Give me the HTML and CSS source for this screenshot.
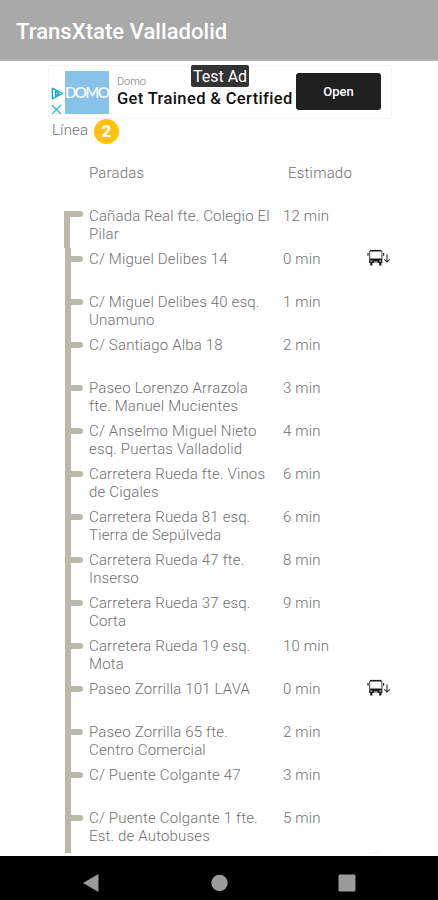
FILE: index.html
```
<!DOCTYPE html>
<html lang="es">
<head>
<meta charset="utf-8">
<title>TransXtate Valladolid</title>
<link rel="stylesheet" href="styles.css">
</head>
<body>
<svg width="0" height="0" class="defs">
  <symbol id="bus" viewBox="0 0 24 18">
    <path d="M3 1.7h11.6" stroke="#1a1a1a" stroke-width="1.6" fill="none"/>
    <path d="M2.7 2v7.5M14.9 2v7.5" stroke="#444" stroke-width="1"/>
    <path d="M1 4v2.8M16.6 4v2.8" stroke="#222" stroke-width="1.2"/>
    <path d="M2.2 9.6h13.2v4.4h-1v2.4h-2.2V14H5.4v2.4H3.2V14h-1z" fill="#1a1a1a"/>
    <path d="M3.1 12h2.3M12.2 12h2.3M6.8 13.2h4" stroke="#ddd" stroke-width="1.2"/>
    <path d="M20 5.2v7.5M17.3 10.4l2.7 2.5 2.9-2.5" stroke="#333" stroke-width="1.1" fill="none"/>
  </symbol>
</svg>
<header class="appbar">TransXtate Valladolid</header>
<main class="content">
  <section class="ad">
    <div class="adchoices">
      <svg width="13" height="13" viewBox="0 0 13 13"><path d="M1.3 1.2v10.6L11.5 6.5zM4.5 4.4v4.4l3.6-2.2z" fill="none" stroke="#16b0cb" stroke-width="1.4" stroke-linejoin="round"/></svg>
      <svg width="11" height="11" viewBox="0 0 11 11"><path d="M1 1l9 9M10 1L1 10" stroke="#38b7d2" stroke-width="1.4"/></svg>
    </div>
    <div class="logo">DOMO</div>
    <div class="adtext"><span class="brand">Domo</span><span class="slogan">Get Trained &amp; Certified</span></div>
    <div class="open">Open</div>
    <span class="testad">Test Ad</span>
  </section>
  <div class="line"><span>Línea</span><b class="badge">2</b></div>
  <div class="heads"><span>Paradas</span><span>Estimado</span></div>
  <div class="stops">
    <div class="row first"><i class="rail"></i><p>Cañada Real fte. Colegio El<br>Pilar</p><span>12 min</span></div>
    <div class="row"><i class="rail"></i><p>C/ Miguel Delibes 14</p><span>0 min</span><svg class="bus"><use href="#bus"/></svg></div>
    <div class="row"><i class="rail"></i><p>C/ Miguel Delibes 40 esq.<br>Unamuno</p><span>1 min</span></div>
    <div class="row"><i class="rail"></i><p>C/ Santiago Alba 18</p><span>2 min</span></div>
    <div class="row"><i class="rail"></i><p>Paseo Lorenzo Arrazola<br>fte. Manuel Mucientes</p><span>3 min</span></div>
    <div class="row"><i class="rail"></i><p>C/ Anselmo Miguel Nieto<br>esq. Puertas Valladolid</p><span>4 min</span></div>
    <div class="row"><i class="rail"></i><p>Carretera Rueda fte. Vinos<br>de Cigales</p><span>6 min</span></div>
    <div class="row"><i class="rail"></i><p>Carretera Rueda 81 esq.<br>Tierra de Sepúlveda</p><span>6 min</span></div>
    <div class="row"><i class="rail"></i><p>Carretera Rueda 47 fte.<br>Inserso</p><span>8 min</span></div>
    <div class="row"><i class="rail"></i><p>Carretera Rueda 37 esq.<br>Corta</p><span>9 min</span></div>
    <div class="row"><i class="rail"></i><p>Carretera Rueda 19 esq.<br>Mota</p><span>10 min</span></div>
    <div class="row"><i class="rail"></i><p>Paseo Zorrilla 101 LAVA</p><span>0 min</span><svg class="bus"><use href="#bus"/></svg></div>
    <div class="row"><i class="rail"></i><p>Paseo Zorrilla 65 fte.<br>Centro Comercial</p><span>2 min</span></div>
    <div class="row"><i class="rail"></i><p>C/ Puente Colgante 47</p><span>3 min</span></div>
    <div class="row last"><i class="rail"></i><p>C/ Puente Colgante 1 fte.<br>Est. de Autobuses</p><span>5 min</span><i class="peek"></i></div>
  </div>
</main>
<nav class="navbar">
  <svg viewBox="0 0 18 18"><path d="M16.5 0v18L1 9z"/></svg>
  <svg viewBox="0 0 18 18"><circle cx="9.5" cy="9" r="8.2"/></svg>
  <svg viewBox="0 0 18 18"><rect x="0.5" y="0.5" width="17" height="17" rx="1.5"/></svg>
</nav>
</body>
</html>
```

FILE: styles.css
```
* { box-sizing: border-box; }
body {
  margin: 0;
  width: 438px;
  height: 900px;
  overflow: hidden;
  display: flex;
  flex-direction: column;
  background: #fff;
  color: #707070;
  font: 300 15px/17.5px Roboto, sans-serif;
}
.defs { position: absolute; }
.appbar {
  height: 61px;
  flex: none;
  padding: 3px 0 0 16px;
  line-height: 57px;
  font-size: 22px;
  letter-spacing: .05px;
  font-weight: 500;
  color: #fff;
  background: #a9a9a9;
  border-bottom: 1px solid #b8b8b8;
}
.content { height: 795px; flex: none; overflow: hidden; }
.ad {
  position: relative;
  display: flex;
  width: 344px;
  height: 54px;
  margin: 4px 0 0 48px;
  border: 1px solid #f3f3f3;
  border-radius: 3px;
}
.adchoices {
  width: 16px;
  padding: 21px 0 0 2px;
  display: flex;
  flex-direction: column;
  gap: 4px;
}
.adchoices svg { flex: none; }
.logo {
  width: 44px;
  height: 43px;
  margin-top: 5px;
  background: #87c2e8;
  color: #fff;
  font: 500 15px/42px Lato, sans-serif;
  letter-spacing: -1.6px;
  white-space: nowrap;
}
.adtext { display: flex; flex-direction: column; width: 178px; padding: 7px 0 0 8px; white-space: nowrap; }
.brand { font-size: 11px; line-height: 17px; letter-spacing: -.1px; color: #777; }
.slogan { font-size: 16.5px; line-height: 17px; font-weight: 500; letter-spacing: .37px; color: #111; }
.open {
  width: 85px;
  height: 37px;
  margin: 7px 0 0 9px;
  border-radius: 3px;
  background: #202020;
  color: #fff;
  text-align: center;
  font-size: 13px;
  line-height: 37px;
  font-weight: 500;
}
.testad {
  position: absolute;
  left: 142px;
  top: -1px;
  width: 58px;
  height: 22px;
  border-radius: 2px;
  background: #333;
  color: #fff;
  font-size: 16px;
  line-height: 23px;
  font-weight: 400;
  text-align: center;
}
.line { display: flex; height: 25px; margin-left: 52px; gap: 6px; align-items: center; }
.line span { width: 36px; padding-bottom: 2px; letter-spacing: .2px; }
.badge {
  width: 25px;
  height: 25px;
  border-radius: 50%;
  background: #ffc107;
  color: #fff;
  font-size: 17px;
  line-height: 25px;
  font-weight: 900;
  text-align: center;
}
.heads {
  display: grid;
  grid-template-columns: 199px 1fr;
  height: 61px;
  padding: 21px 0 0 89px;
  letter-spacing: .2px;
}
.stops { display: flex; flex-direction: column; height: 648px; overflow: hidden; }
.row {
  display: grid;
  grid-template-columns: 24px 194px 84px 24px;
  height: 43px;
  flex: none;
  margin-left: 65px;
  letter-spacing: .17px;
  white-space: nowrap;
}
.row p { margin: 3px 0 0; }
.row span { margin-top: 3px; }
.rail { display: block; height: 43px; border-left: 6px solid #bdb8ac; }
.rail::after {
  content: "";
  display: block;
  width: 12px;
  height: 6px;
  margin-top: 7.5px;
  border-radius: 0 3px 3px 0;
  background: #bdb8ac;
}
.first { margin-left: 64px; grid-template-columns: 25px 194px 84px 24px; }
.first .rail { height: 37px; margin-top: 6px; }
.first .rail::after { width: 13px; margin-top: 0; }
.last { height: 48px; }
.last .rail { height: 47px; }
.peek { width: 8px; height: 2px; margin: 45px 0 0 4px; background: #f0f0f0; }
.bus { width: 24px; height: 18px; margin-top: 1px; }
.navbar {
  height: 44px;
  flex: none;
  display: flex;
  justify-content: space-between;
  align-items: center;
  padding: 9px 82px 0;
  background: #000;
}
.navbar svg { width: 18px; height: 18px; fill: #9b9b9b; }
```
